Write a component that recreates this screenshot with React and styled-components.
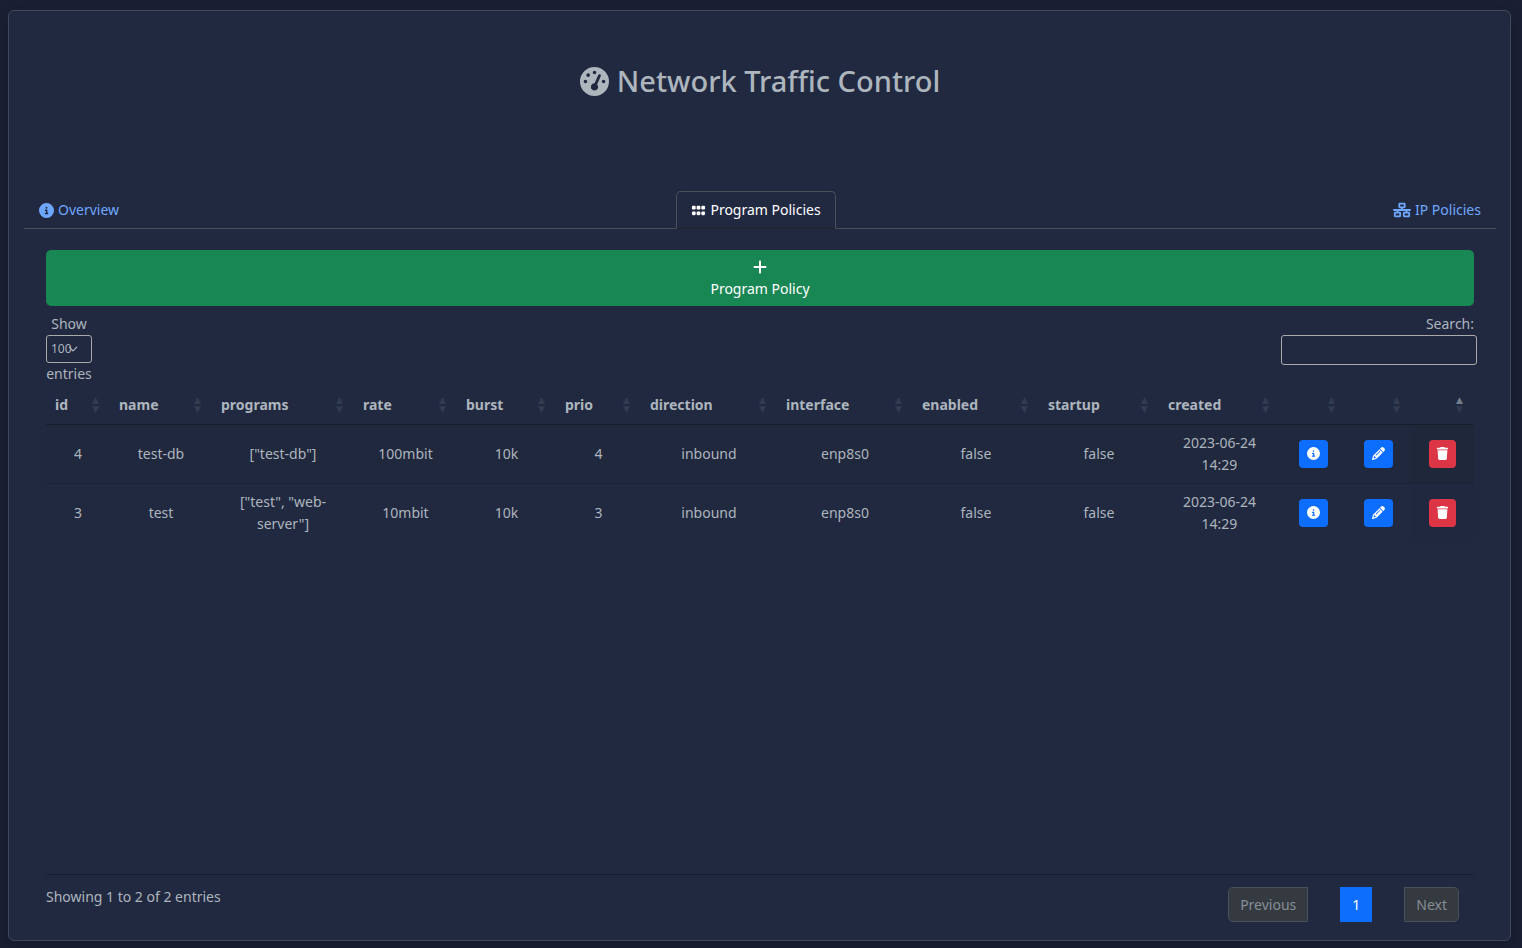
import React from "react";
import styled, { createGlobalStyle } from "styled-components";
import {
  FaCircleInfo,
  FaGaugeHigh,
  FaGrip,
  FaNetworkWired,
  FaPencil,
  FaPlus,
  FaTrash,
} from "react-icons/fa6";

const GlobalStyle = createGlobalStyle`
  *, *::before, *::after { box-sizing: border-box; }
  body {
    margin: 0;
    background: #1a1f33;
    color: #adb5bd;
    font-family: "Noto Sans", "Liberation Sans", sans-serif;
    font-size: 14px;
    line-height: 22px;
  }
  button, input, select { font: inherit; color: inherit; }
`;

const Page = styled.div`
  display: flex;
  min-height: 100vh;
  padding: 10px 11px 7px 8px;
`;

const Card = styled.main`
  flex: 1;
  min-width: 0;
  display: flex;
  flex-direction: column;
  padding: 0 14px 18px 15px;
  background: #212941;
  border: 1px solid #414859;
  border-radius: 6px;
  box-shadow: 0 8px 16px rgba(0, 0, 0, 0.15);
`;

const Title = styled.h1`
  display: flex;
  align-items: center;
  justify-content: center;
  gap: 8px;
  margin: 0;
  padding: 52px 0 92px;
  font-size: 29px;
  font-weight: 500;
  line-height: 36px;
`;

const Tabs = styled.nav`
  display: flex;
  justify-content: space-between;
  border-bottom: 1px solid #495057;
`;

const Tab = styled.a`
  display: flex;
  align-items: center;
  gap: 4px;
  height: 38px;
  margin-bottom: -1px;
  padding: 0 14px;
  border: 1px solid transparent;
  border-radius: 5px 5px 0 0;
  color: #6ea8fe;
  text-decoration: none;

  &[aria-current="page"] {
    color: #fff;
    border-color: #495057 #495057 #212529;
  }
`;

const Panel = styled.section`
  flex: 1;
  display: flex;
  flex-direction: column;
  padding: 21px 22px 0;
`;

const AddButton = styled.button`
  display: flex;
  flex-direction: column;
  align-items: center;
  width: 100%;
  height: 56px;
  padding: 6px;
  border: 0;
  border-radius: 5px;
  background: #198754;
  color: #fff;

  svg { height: 22px; }
`;

const Toolbar = styled.div`
  display: flex;
  justify-content: space-between;
  margin-top: 7px;
`;

const LengthLabel = styled.label`
  display: flex;
  flex-direction: column;
  align-items: center;
`;

const SelectBox = styled.span`
  position: relative;
  display: block;
  width: 46px;
  height: 28px;

  svg {
    position: absolute;
    top: 9px;
    left: 22px;
    pointer-events: none;
  }
`;

const Select = styled.select`
  appearance: none;
  width: 100%;
  height: 100%;
  padding: 0 4px;
  border: 1px solid #aaa;
  border-radius: 3px;
  background: transparent;
  font-size: 12px;
`;

const SearchLabel = styled.label`
  display: flex;
  flex-direction: column;
  align-items: flex-end;
`;

const SearchInput = styled.input`
  width: 196px;
  height: 30px;
  margin-right: -3px;
  padding: 4px;
  border: 1px solid #aaa;
  border-radius: 3px;
  background: transparent;
`;

const TableArea = styled.div`
  flex: 1;
  border-bottom: 1px solid #191e2b;
`;

const Table = styled.table`
  width: 100%;
  table-layout: fixed;
  border-collapse: separate;
  border-spacing: 0;
  text-align: center;
`;

const Col = styled.col`
  width: ${(p) => p.$width}px;
`;

const HeadCell = styled.th`
  height: 40px;
  padding: 0 11px 0 9px;
  border-bottom: 1px solid #191e2b;
  font-weight: 700;
`;

const SortButton = styled.button`
  display: flex;
  align-items: center;
  justify-content: space-between;
  width: 100%;
  padding: 0;
  border: 0;
  background: none;
`;

const Arrows = styled.span`
  display: flex;
  flex-direction: column;
  margin-left: auto;
  font-family: "DejaVu Sans", sans-serif;
  font-size: 9px;
  font-weight: 400;
  line-height: 9px;

  &::before { content: "▲" / ""; opacity: ${(p) => (p.$active ? 0.6 : 0.125)}; }
  &::after { content: "▼" / ""; opacity: 0.125; }
`;

const Row = styled.tr`
  --stripe: ${(p) => (p.$striped ? "#20283e" : "#212941")};
  --sorted: ${(p) => (p.$striped ? "#1f273a" : "#20283f")};
`;

const Cell = styled.td`
  height: ${(p) => (p.$first ? 58 : 59)}px;
  padding: 0 9px;
  background: ${(p) => (p.$sorted ? "var(--sorted)" : "var(--stripe)")};
  border-top: ${(p) => (p.$first ? 0 : "1px solid #1d2334")};
`;

const ActionButton = styled.button`
  display: inline-flex;
  align-items: center;
  justify-content: center;
  width: ${(p) => (p.$danger ? 27 : 29)}px;
  height: 28px;
  padding: 0 0 2px;
  border: 0;
  border-radius: 4px;
  vertical-align: middle;
  background: ${(p) => (p.$danger ? "#dc3545" : "#0d6efd")};
  color: #fff;
`;

const Footer = styled.footer`
  display: flex;
  justify-content: space-between;
  padding-top: 12px;
`;

const Info = styled.p`
  margin: 0;
  line-height: 20px;
`;

const Pagination = styled.nav`
  display: flex;
  gap: 32px;
  padding-right: 15px;
`;

const PageButton = styled.button`
  height: 35px;
  padding: 0 11px;
  border: 1px solid ${(p) => (p.$active ? "#0d6efd" : "#495057")};
  border-radius: ${(p) => p.$radius || "0"};
  background: ${(p) => (p.$active ? "#0d6efd" : "#343a40")};
  color: ${(p) => (p.$active ? "#fff" : "#868e96")};
`;

const columns = [
  { label: "id", width: 64 },
  { label: "name", width: 102 },
  { label: "programs", width: 142 },
  { label: "rate", width: 103 },
  { label: "burst", width: 99 },
  { label: "prio", width: 85 },
  { label: "direction", width: 136 },
  { label: "interface", width: 136 },
  { label: "enabled", width: 126 },
  { label: "startup", width: 120 },
  { label: "created", width: 121 },
  { label: "", name: "details", width: 66 },
  { label: "", name: "edit", width: 65 },
  { label: "", name: "delete", width: 63, sorted: true },
];

const rows = [
  ["4", "test-db", '["test-db"]', "100mbit", "10k", "4", "inbound", "enp8s0", "false", "false", "2023-06-24 14:29"],
  ["3", "test", '["test", "web-server"]', "10mbit", "10k", "3", "inbound", "enp8s0", "false", "false", "2023-06-24 14:29"],
];

export default function App() {
  return (
    <>
      <GlobalStyle />
      <Page>
        <Card>
          <Title>
            <FaGaugeHigh />
            Network Traffic Control
          </Title>
          <Tabs>
            <Tab href="#overview"><FaCircleInfo size={15} />Overview</Tab>
            <Tab href="#programs" aria-current="page"><FaGrip size={15} />Program Policies</Tab>
            <Tab href="#ip"><FaNetworkWired size={18} />IP Policies</Tab>
          </Tabs>
          <Panel>
            <AddButton type="button">
              <FaPlus size={14} />
              Program Policy
            </AddButton>
            <Toolbar>
              <LengthLabel>
                Show
                <SelectBox>
                  <Select defaultValue="100">
                    <option>10</option>
                    <option>25</option>
                    <option>50</option>
                    <option>100</option>
                  </Select>
                  <svg width="10" height="10" viewBox="0 0 16 16" fill="none" stroke="#adb5bd" strokeWidth="2" strokeLinecap="round" strokeLinejoin="round">
                    <path d="m2 5 6 6 6-6" />
                  </svg>
                </SelectBox>
                entries
              </LengthLabel>
              <SearchLabel>
                Search:
                <SearchInput type="search" />
              </SearchLabel>
            </Toolbar>
            <TableArea>
              <Table>
                <colgroup>
                  {columns.map((c) => <Col key={c.label || c.name} $width={c.width} />)}
                </colgroup>
                <thead>
                  <tr>
                    {columns.map((c) => (
                      <HeadCell key={c.label || c.name} scope="col" aria-sort={c.sorted ? "ascending" : undefined}>
                        <SortButton type="button" aria-label={c.label || c.name}>
                          {c.label}
                          <Arrows $active={c.sorted} />
                        </SortButton>
                      </HeadCell>
                    ))}
                  </tr>
                </thead>
                <tbody>
                  {rows.map((row, r) => (
                    <Row key={row[0]} $striped={r % 2 === 0}>
                      {row.map((value, i) => <Cell key={i} $first={r === 0}>{value}</Cell>)}
                      <Cell $first={r === 0}>
                        <ActionButton type="button" aria-label="Details"><FaCircleInfo size={13} /></ActionButton>
                      </Cell>
                      <Cell $first={r === 0}>
                        <ActionButton type="button" aria-label="Edit"><FaPencil size={13} /></ActionButton>
                      </Cell>
                      <Cell $first={r === 0} $sorted>
                        <ActionButton type="button" aria-label="Delete" $danger><FaTrash size={13} /></ActionButton>
                      </Cell>
                    </Row>
                  ))}
                </tbody>
              </Table>
            </TableArea>
            <Footer>
              <Info>Showing 1 to 2 of 2 entries</Info>
              <Pagination aria-label="Pages">
                <PageButton type="button" $radius="5px 0 0 5px">Previous</PageButton>
                <PageButton type="button" $active aria-current="page">1</PageButton>
                <PageButton type="button" $radius="0 5px 5px 0">Next</PageButton>
              </Pagination>
            </Footer>
          </Panel>
        </Card>
      </Page>
    </>
  );
}
